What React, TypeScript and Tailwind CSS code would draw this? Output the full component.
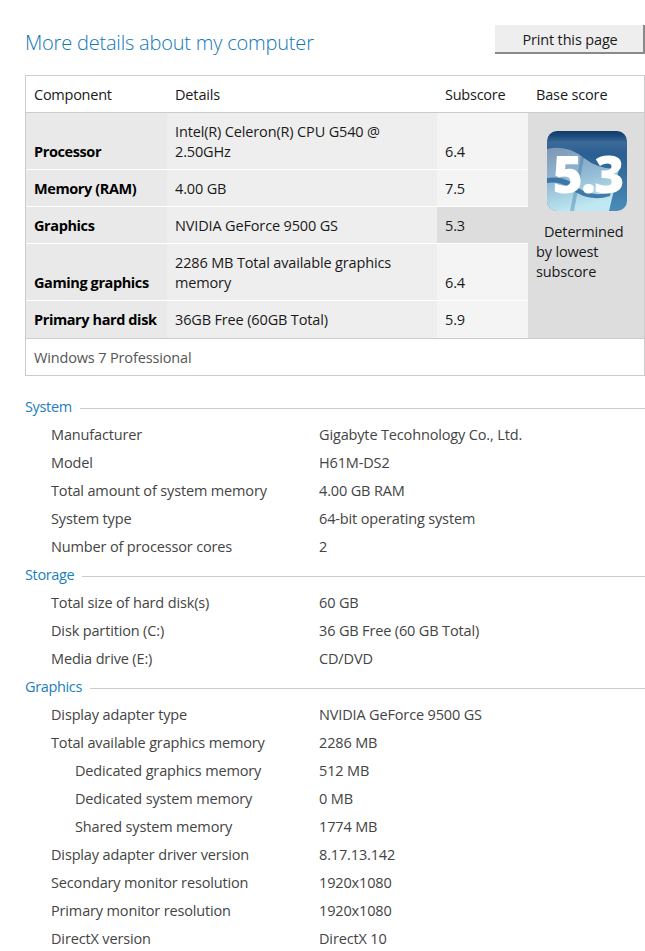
import React from "react";

const scores = [
  { name: "Processor", details: "Intel(R) Celeron(R) CPU G540 @ 2.50GHz", score: "6.4" },
  { name: "Memory (RAM)", details: "4.00 GB", score: "7.5" },
  { name: "Graphics", details: "NVIDIA GeForce 9500 GS", score: "5.3", lowest: true },
  { name: "Gaming graphics", details: "2286 MB Total available graphics memory", score: "6.4" },
  { name: "Primary hard disk", details: "36GB Free (60GB Total)", score: "5.9" },
];

const sections = [
  {
    title: "System",
    rows: [
      ["Manufacturer", "Gigabyte Tecohnology Co., Ltd."],
      ["Model", "H61M-DS2"],
      ["Total amount of system memory", "4.00 GB RAM"],
      ["System type", "64-bit operating system"],
      ["Number of processor cores", "2"],
    ],
  },
  {
    title: "Storage",
    rows: [
      ["Total size of hard disk(s)", "60 GB"],
      ["Disk partition (C:)", "36 GB Free (60 GB Total)"],
      ["Media drive (E:)", "CD/DVD"],
    ],
  },
  {
    title: "Graphics",
    rows: [
      ["Display adapter type", "NVIDIA GeForce 9500 GS"],
      ["Total available graphics memory", "2286 MB"],
      ["Dedicated graphics memory", "512 MB", true],
      ["Dedicated system memory", "0 MB", true],
      ["Shared system memory", "1774 MB", true],
      ["Display adapter driver version", "8.17.13.142"],
      ["Secondary monitor resolution", "1920x1080"],
      ["Primary monitor resolution", "1920x1080"],
      ["DirectX version", "DirectX 10"],
    ],
  },
];

function ScoreBadge() {
  return (
    <div className="relative w-[80px] h-[80px] rounded-[10px] overflow-hidden">
      <svg width="80" height="80" viewBox="0 0 80 80" className="absolute inset-0">
        <defs>
          <linearGradient id="badgeBg" x1="0" y1="0" x2="0" y2="1">
            <stop offset="0" stopColor="#0f3a66" />
            <stop offset="0.06" stopColor="#1b4a7a" />
            <stop offset="0.14" stopColor="#3a6a98" />
            <stop offset="0.3" stopColor="#2a5f92" />
            <stop offset="1" stopColor="#4a8db9" />
          </linearGradient>
          <linearGradient id="badgeFlag" x1="0" y1="0" x2="0.3" y2="1">
            <stop offset="0" stopColor="#7d96b6" />
            <stop offset="0.55" stopColor="#93bcd6" />
            <stop offset="1" stopColor="#bfe8f2" />
          </linearGradient>
        </defs>
        <rect width="80" height="80" fill="url(#badgeBg)" />
        <path d="M0 18 Q20 13 37 27 Q52 39 72 38 L62 80 H0 Z" fill="url(#badgeFlag)" />
        <path d="M0 47 Q15 45 25 52 Q42 68 64 61 L63 65 Q42 72 22 57 Q12 50 0 52 Z" fill="#2f6a9c" opacity="0.85" />
        <path d="M37 27 L27 80 H23 L34 25 Z" fill="#2f6a9c" opacity="0.35" />
      </svg>
      <span className="absolute inset-0 flex items-center justify-center text-white font-extrabold text-[52px] leading-none tracking-[-2px] pt-[3px] pl-[2px]">
        5.3
      </span>
    </div>
  );
}

export default function App() {
  return (
    <div className="w-[645px] h-[951px] overflow-hidden bg-white text-[14.5px] text-[#1a1a1a] font-['Open_Sans','Noto_Sans',sans-serif] tracking-[-0.15px]">
      <div className="flex items-start justify-between pl-[25px] pt-[25px]">
        <h1 className="text-[20px] leading-[36px] font-light text-[#0f78b8] tracking-[-0.2px]">More details about my computer</h1>
        <button className="w-[150px] h-[29px] pt-[3px] pl-[2px] bg-[#eeeeee] border-r-2 border-b-2 border-[#8a8a8a] text-[14.5px] tracking-[-0.15px] text-[#1a1a1a]">
          Print this page
        </button>
      </div>

      <div className="ml-[25px] mt-[14px] w-[620px] border border-[#cccccc]">
        <div className="grid grid-cols-[141px_270px_91px_116px] grid-rows-[37px_57px_37px_37px_57px_38px]">
          <div className="flex items-center pl-2 pt-[1px] border-b border-[#cccccc] tracking-[-0.25px]">Component</div>
          <div className="flex items-center pl-2 pt-[1px] border-b border-[#cccccc]">Details</div>
          <div className="flex items-center pl-2 pt-[1px] border-b border-[#cccccc] tracking-[-0.25px]">Subscore</div>
          <div className="flex items-center pl-2 pt-[1px] border-b border-[#cccccc]">Base score</div>
          {scores.map((row, i) => (
            <React.Fragment key={row.name}>
              <div
                style={{ gridRow: i + 2, gridColumn: 1 }}
                className={`flex items-end pl-2 font-bold text-black tracking-[-0.4px] bg-[#e9e9e9] whitespace-nowrap ${i < 4 ? "pb-[6px] border-b border-white" : "pb-[7px] border-b border-[#cccccc]"}`}
              >
                {row.name}
              </div>
              <div
                style={{ gridRow: i + 2, gridColumn: 2 }}
                className={`flex items-end pl-2 pr-3 bg-[#eeeeee] leading-[20px] ${i < 4 ? "pb-[7px] border-b border-white" : "pb-[8px] border-b border-[#cccccc]"}`}
              >
                {row.details}
              </div>
              <div
                style={{ gridRow: i + 2, gridColumn: 3 }}
                className={`flex items-end pl-2 ${row.lowest ? "bg-[#dddddd]" : "bg-[#f4f4f4]"} ${i < 4 ? "pb-[6px] border-b border-white" : "pb-[7px] border-b border-[#cccccc]"}`}
              >
                {row.score}
              </div>
            </React.Fragment>
          ))}
          <div className="col-start-4 row-start-2 row-span-5 bg-[#dddddd] border-b border-[#cccccc] px-2 pt-[18px] leading-[20px]">
            <div className="flex justify-center mb-[11px] ml-[1px]">
              <ScoreBadge />
            </div>
            <div className="pr-2">
              <span className="pl-2">Determined</span> by lowest subscore
            </div>
          </div>
        </div>
        <div className="h-[36px] flex items-center pl-2 pt-[1px] text-[#555555]">Windows 7 Professional</div>
      </div>

      <div className="pl-[25px] mt-[17px] text-[#444444]">
        {sections.map((s) => (
          <section key={s.title}>
            <div className="flex items-center h-[28px]">
              <span className="text-[#1a80bd] mr-[8px] tracking-[-0.35px]">{s.title}</span>
              <div className="flex-1 h-px mt-[2px] bg-[#cccccc]" />
            </div>
            {s.rows.map((r) => (
              <div key={r[0] as string} className="flex h-[28px] items-center">
                <div className={`w-[294px] ${r[2] ? "pl-[50px]" : "pl-[26px]"}`}>{r[0]}</div>
                <div>{r[1]}</div>
              </div>
            ))}
          </section>
        ))}
      </div>
    </div>
  );
}
